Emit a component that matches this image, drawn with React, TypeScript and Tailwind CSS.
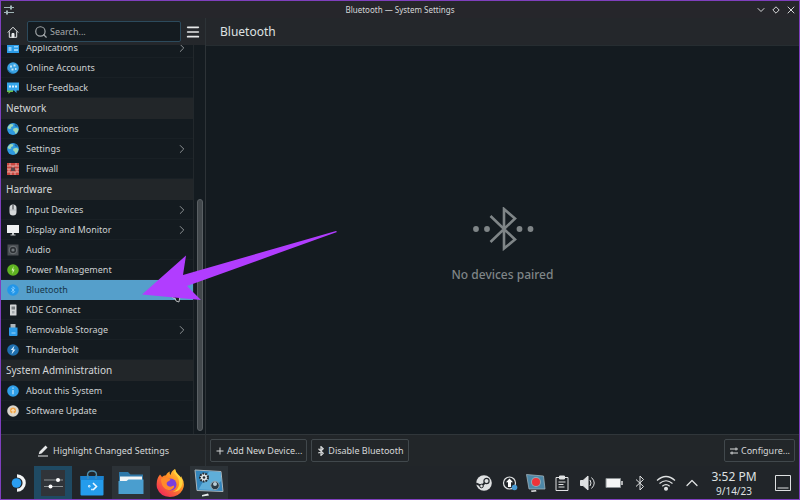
import { useState } from 'react';
import type { ReactNode } from 'react';
import { ChevronDown, ChevronRight, ChevronUp, Menu, Search, X } from 'lucide-react';

type Item = {
  label: string;
  icon: ReactNode;
  hasChildren?: boolean;
};

type Section = {
  title?: string;
  items: Item[];
};

function Globe() {
  return (
    <svg viewBox="0 0 12 12" className="size-3">
      <circle cx="6" cy="6" r="5.9" fill="#2f9be0" />
      <path d="M1 3.5 3.5 1l3 .4-.8 2-1.700.6.400 1.600L2.200 6 .6 5zM6.500 5.500l3-.8 2 1.400-.9 3-2.100 1.800-1-2.400-1.500-1.200z" fill="#9fd8b4" />
      <path d="M8 .8 11 3.500l-2 .3L7.600 2.400z" fill="#1568a8" />
    </svg>
  );
}

function Disc({ color, children }: { color: string; children: ReactNode }) {
  return (
    <svg viewBox="0 0 12 12" className="size-3" fill="none">
      <circle cx="6" cy="6" r="5.8" fill={color} />
      {children}
    </svg>
  );
}

const sections: Section[] = [
  {
    items: [
      {
        label: 'Applications',
        hasChildren: true,
        icon: (
          <svg viewBox="0 0 12 12" className="size-3">
            <path d="M0 1h12v10H0z" fill="#2b9be6" />
            <path d="M1.500 5h3v4h-3zM7 4h4v1.500H7zM7 7h4v2H7z" fill="#8fd0fa" />
          </svg>
        ),
      },
      {
        label: 'Online Accounts',
        icon: (
          <Disc color="#3aa3e3">
            <path d="M3 3.500h2v2H3zM6.500 2.500h2v2h-2zM4.500 6.500h2v2h-2zM8 6h1.500v2H8z" fill="#bfe4f8" />
            <path d="M1 8c1 2 3 3.500 6 3.500" stroke="#1c6ea8" />
          </Disc>
        ),
      },
      {
        label: 'User Feedback',
        icon: (
          <svg viewBox="0 0 12 12" className="size-3">
            <path d="M0 5h6v5H3.500L1.500 12v-2H0z" fill="#6cc04a" />
            <path d="M0 .5h12v8H9.500V11L7 8.500H0z" fill="#35a6ea" />
            <path d="M2 3.500h2v2H2zM5 3.500h2v2H5zM8 3.500h2v2H8z" fill="#d8f0ff" />
          </svg>
        ),
      },
    ],
  },
  {
    title: 'Network',
    items: [
      { label: 'Connections', icon: <Globe /> },
      { label: 'Settings', icon: <Globe />, hasChildren: true },
      {
        label: 'Firewall',
        icon: (
          <svg viewBox="0 0 12 12" className="size-3">
            <path d="M0 0h12v12H0z" fill="#c9463f" />
            <path d="M0 3h12M0 6h12M0 9h12M3 0v3M9 0v3M6 3v3M2 6v3M10 6v3M4 9v3M8 9v3" stroke="#e9bdb6" strokeWidth=".8" />
            <path d="M4 4.500h4v3.500H4z" fill="#5b4548" />
          </svg>
        ),
      },
    ],
  },
  {
    title: 'Hardware',
    items: [
      {
        label: 'Input Devices',
        hasChildren: true,
        icon: (
          <svg viewBox="0 0 12 12" className="size-3">
            <rect x="2.5" y=".5" width="7" height="11" rx="3.5" fill="#d5d8da" />
            <path d="M6 1v4.500" stroke="#5d6266" strokeWidth="1.4" />
            <path d="M2.800 6h6.400" stroke="#a6abae" strokeWidth=".6" />
          </svg>
        ),
      },
      {
        label: 'Display and Monitor',
        hasChildren: true,
        icon: (
          <svg viewBox="0 0 12 12" className="size-3">
            <path d="M0 1h12v8H0z" fill="#eff1f2" />
            <path d="M5 9h2v1.500h1.500v1h-5v-1H5z" fill="#c4c8ca" />
          </svg>
        ),
      },
      {
        label: 'Audio',
        icon: (
          <svg viewBox="0 0 12 12" className="size-3">
            <path d="M.5 .5h11v11H.5z" fill="#4a4f53" />
            <circle cx="6" cy="6" r="3.8" fill="#2c3034" stroke="#7d8387" strokeWidth=".8" />
            <circle cx="6" cy="6" r="1.6" fill="#73797d" />
          </svg>
        ),
      },
      {
        label: 'Power Management',
        icon: (
          <Disc color="#5fb321">
            <path d="M6.600 2 4.500 6.400h1.300L5.400 10l2.200-4.600H6.200z" fill="#d9f5b8" />
          </Disc>
        ),
      },
      {
        label: 'Bluetooth',
        icon: (
          <Disc color="#2296e8">
            <path d="m4.300 4.300 3.400 3.300L6 9.300V2.700l1.700 1.700-3.400 3.300" stroke="#8fd2ff" strokeWidth=".8" />
          </Disc>
        ),
      },
      {
        label: 'KDE Connect',
        icon: (
          <svg viewBox="0 0 12 12" className="size-3">
            <rect x="3" y=".5" width="6.5" height="11" rx=".6" fill="#d3d6d7" />
            <path d="M4.500 2.500H8v3H4.500z" fill="#767c80" />
            <path d="M5 7h2.500v2.500H5z" fill="#a4a9ac" />
          </svg>
        ),
      },
      {
        label: 'Removable Storage',
        hasChildren: true,
        icon: (
          <svg viewBox="0 0 12 12" className="size-3">
            <path d="M3.500 0h5v4h-5z" fill="#aeb5b9" />
            <path d="M2 3.500h8.500V11q0 1-1 1H3q-1 0-1-1z" fill="#2d9ce8" />
            <path d="M4.500 9h4" stroke="#9ad6fb" />
          </svg>
        ),
      },
      {
        label: 'Thunderbolt',
        icon: (
          <Disc color="#1e6fae">
            <path d="M7.500 1.500 3.800 6h2L4.500 10.500 8.500 5.500H6.400z" fill="#d9efff" />
          </Disc>
        ),
      },
    ],
  },
  {
    title: 'System Administration',
    items: [
      {
        label: 'About this System',
        icon: (
          <Disc color="#2f9fe8">
            <path d="M6 5v4.300M6 2.600v1.200" stroke="#d5eeff" strokeWidth="1.1" />
          </Disc>
        ),
      },
      {
        label: 'Software Update',
        icon: (
          <Disc color="#d9d5cc">
            <circle cx="6" cy="5.5" r="3" fill="#f0a64a" />
            <path d="M6 9.500V4.500M4.500 6 6 4.300 7.500 6" stroke="#fff3dd" strokeWidth=".9" />
          </Disc>
        ),
      },
    ],
  },
];

function BluetoothGlyph({ className }: { className?: string }) {
  return (
    <svg viewBox="0 0 16 16" className={className} fill="none" stroke="currentColor">
      <path d="m4 4.500 7.500 7L8 15V1l3.500 3.500-7.500 7" />
    </svg>
  );
}

function Sliders({ className }: { className?: string }) {
  return (
    <svg viewBox="0 0 12 12" className={className} fill="currentColor">
      <path d="M1 3h10v1H1zM1 8h10v1H1z" />
      <path d="M7 1.500h2v4H7zM3 6.500h2v4H3z" />
    </svg>
  );
}

function TitleBar() {
  return (
    <div className="grid h-[17px] shrink-0 grid-cols-3 items-center bg-[#26262b] px-0.5 text-[8px] leading-3 text-[#d6d8d9]">
      <Sliders className="size-3 text-[#9fb3b5]" />
      <span className="text-center">Bluetooth — System Settings</span>
      <div className="flex justify-end gap-[3px]">
        <button aria-label="Minimize">
          <ChevronDown className="size-3" strokeWidth={2} />
        </button>
        <button aria-label="Restore">
          <svg viewBox="0 0 12 12" className="size-3" fill="none" stroke="currentColor">
            <path d="M6 2.800 9.200 6 6 9.200 2.800 6z" />
          </svg>
        </button>
        <button aria-label="Close">
          <X className="size-3" strokeWidth={2} />
        </button>
      </div>
    </div>
  );
}

function Sidebar() {
  const [selected, setSelected] = useState('Bluetooth');

  return (
    <aside className="flex w-[205px] shrink-0 flex-col border-r border-[#2d3337]">
      <div className="flex h-[27px] shrink-0 items-center gap-1 bg-[#24272b] pr-1 pl-1.5">
        <button aria-label="Home">
          <svg viewBox="0 0 12 12" className="size-3" fill="none" stroke="#e6e8e9">
            <path d="M.8 6.500 6 1.200l5.200 5.300M2.300 5.500v5.800h7.400V5.500" />
            <path d="M5 7.500h2v3.800H5z" fill="#e6e8e9" />
          </svg>
        </button>
        <label className="ml-1 flex h-[21px] min-w-0 flex-1 items-center gap-0.5 rounded-xs border border-[#2c4a5c] bg-[#141b20] px-1.5 text-[9px] text-[#a4a9ab]">
          <Search className="size-3.5 shrink-0" strokeWidth={2} />
          <input
            type="text"
            aria-label="Search"
            placeholder="Search..."
            className="min-w-0 flex-1 bg-transparent outline-none placeholder:text-[#a4a9ab]"
          />
        </label>
        <button aria-label="Menu">
          <Menu className="size-4 text-[#e6e8e9]" strokeWidth={2.5} />
        </button>
      </div>

      <div className="flex min-h-0 flex-1 bg-[#141b20]">
        <nav className="min-w-0 flex-1 overflow-hidden border-r border-[#22282c]">
          <div className="-mt-[7px]">
            {sections.map((section, i) => (
              <div key={i}>
                {section.title && (
                  <h2 className="h-[21px] bg-[#222629] px-[5px] text-[10px] leading-[21px] text-[#d5d7d8]">
                    {section.title}
                  </h2>
                )}
                {section.items.map((item) => (
                  <button
                    key={item.label}
                    onClick={() => setSelected(item.label)}
                    className={`flex h-5 w-full items-center gap-[7px] border-b pr-1 pl-1.5 text-left text-[9px] ${
                      selected === item.label
                        ? 'border-[#559fcb] bg-[#559fcb] text-[#17364a]'
                        : 'border-[#192025] text-[#cdd0d1]'
                    }`}
                  >
                    {item.icon}
                    <span className="flex-1">{item.label}</span>
                    {item.hasChildren && <ChevronRight className="size-3.5 text-[#9a9fa1]" strokeWidth={1.5} />}
                  </button>
                ))}
              </div>
            ))}
          </div>
        </nav>
        <div className="flex w-[11px] flex-col justify-end pr-0.5 pb-[3px] pl-[3px]">
          <div className="h-[60%] rounded-full border border-[#5a6064] bg-[#42484c]" />
        </div>
      </div>

      <div className="flex h-8 shrink-0 items-center justify-center border-t border-[#30363a] bg-[#222629]">
        <button className="flex items-center gap-1 text-[9px] text-[#d5d7d8]">
          <svg viewBox="0 0 12 12" className="size-3" fill="#e6e8e9">
            <path d="m2.500 6.500 6-6 2 2-6 6-2.800.8zM1 10.500h10v1H1z" />
          </svg>
          Highlight Changed Settings
        </button>
      </div>
    </aside>
  );
}

const actionButton =
  'flex h-[23px] items-center gap-0.5 rounded-xs border border-[#41484c] bg-[#222629] px-1 text-[9px] text-[#d5d7d8]';

function DevicePage() {
  return (
    <main className="flex min-w-0 flex-1 flex-col">
      <div className="flex h-[27px] shrink-0 items-center bg-[#24272b] px-3.5">
        <h1 className="text-xs text-[#dfe1e2]">Bluetooth</h1>
      </div>

      <div className="flex min-h-0 flex-1 flex-col items-center justify-center gap-3.5 border-t border-[#262d31] bg-[#141b20] pt-3 text-[#7f8587]">
        <svg viewBox="0 0 62 44" className="h-11 w-[62px]" fill="none">
          <path d="M18.500 9 43 32.500 32 41.500V2l11 9.500L18.500 35" stroke="currentColor" strokeWidth="2.6" />
          <g fill="currentColor">
            <circle cx="4" cy="22" r="2.9" />
            <circle cx="15" cy="22" r="2.9" />
            <circle cx="47.5" cy="22" r="2.9" />
            <circle cx="58.5" cy="22" r="2.9" />
          </g>
        </svg>
        <p className="text-xs leading-5 font-medium">No devices paired</p>
      </div>

      <div className="flex h-8 shrink-0 items-center gap-1 border-t border-[#30363a] bg-[#222629] px-1">
        <button className={actionButton}>
          <svg viewBox="0 0 10 10" className="size-2.5" stroke="currentColor">
            <path d="M5 1.500v7M1.500 5h7" />
          </svg>
          Add New Device...
        </button>
        <button className={actionButton}>
          <BluetoothGlyph className="size-2.5 stroke-2" />
          Disable Bluetooth
        </button>
        <button className={`${actionButton} ml-auto`}>
          <svg viewBox="0 0 10 10" className="size-2.5" fill="none" stroke="currentColor">
            <path d="M1 3h8M1 7h8M7 1.500v3M3 5.500v3" />
          </svg>
          Configure...
        </button>
      </div>
    </main>
  );
}

function Taskbar() {
  const slot = 'flex w-[38px] items-center justify-center';
  const tray = 'flex w-[26px] items-center justify-center';

  return (
    <footer className="flex h-[33px] shrink-0 bg-[#212529] pr-2 text-[#dfe1e2]">
      <button aria-label="Application launcher" className="flex w-[33px] items-center justify-center">
        <svg viewBox="0 0 16 20" className="h-5 w-4" fill="none">
          <circle cx="6.5" cy="10" r="4.8" fill="#2a9df0" />
          <path d="M7 2.800a7.200 7.200 0 0 1 0 14.400" stroke="#f4f6f7" strokeWidth="3.2" />
        </svg>
      </button>
      <div className="flex gap-px">
        <button aria-label="System Settings" className={`${slot} bg-[#1f4a63]`}>
          <svg viewBox="0 0 24 26" className="h-[26px] w-6">
            <path d="M0 0h24v26H0z" fill="#303439" />
            <path d="M3 10h19M3 16.500h19" stroke="#8f9497" />
            <circle cx="17" cy="10" r="2" fill="#fff" />
            <circle cx="9.5" cy="16.5" r="2" fill="#fff" />
          </svg>
        </button>
        <button aria-label="Discover" className={slot}>
          <svg viewBox="0 0 24 26" className="h-[26px] w-6" fill="none">
            <path d="M7.500 10V5q0-4 4.500-4t4.500 4v5" stroke="#4f8fae" strokeWidth="1.3" />
            <path d="M.5 6h23v18.500q0 1-1 1h-21q-1 0-1-1z" fill="#249cec" />
            <path d="M.5 6h23v4H.5z" fill="#1b83d0" />
            <path d="M8 5v4M16 5v4" stroke="#4f8fae" />
            <path d="m13 13 3.500 3.500L13 20" stroke="#f0f9ff" strokeWidth="1.6" />
            <path d="M8.500 15.500h1.500v1.500H8.500zM11.500 19h1v1h-1z" stroke="#c8e9ff" />
          </svg>
        </button>
        <button aria-label="File manager" className={`${slot} bg-[#2c3237]`}>
          <svg viewBox="0 0 26 24" className="h-6 w-[26px]">
            <path d="M1 1h9l2.500 2.500H25V12H1z" fill="#2f78a8" />
            <path d="M2 5.500h22V12H2z" fill="#f2f5f6" />
            <path d="M.5 10h8l2-1.500h15V23H.5z" fill="#4a9ecf" />
          </svg>
        </button>
        <button aria-label="Firefox" className={slot}>
          <svg viewBox="0 0 28 28" className="size-7">
            <defs>
              <linearGradient id="fox" x1="1" y1="0" x2="0.2" y2="1">
                <stop offset="0" stopColor="#ffe24a" />
                <stop offset="0.45" stopColor="#ff9022" />
                <stop offset="1" stopColor="#f0245a" />
              </linearGradient>
            </defs>
            <path d="M4 5.500 6 8q1.500-1.500 4-1.700C11 4 12.500 3 14 2.500q-1 2 .5 3.500C15 3 17 1 19 0q0 3 3 5.500 2 1.500 3 4V7q5 8 1.500 14Q22.500 28 14 28 4 27.500 1 19-.5 11 4 5.500" fill="url(#fox)" />
            <circle cx="14.5" cy="15.5" r="6" fill="#7a3fdc" />
            <path d="M5 10q3-2.500 6.500-.5l3 .5q-.5 2-3 2.700-2 2 .5 4.300 3 1.500 5.500-.5 1.500 1-.5 3-3.500 3-7.500.5Q5 17 5 10" fill="#ff8a2a" />
            <path d="M18 4q6 5 5 12-1 5-6 7 8-.5 9.500-8.500Q27 9 22 5.500 19.500 3 19 0z" fill="#ffd43c" />
          </svg>
        </button>
        <button aria-label="Spectacle" className={`${slot} bg-[#2c3237]`}>
          <svg viewBox="0 0 30 30" className="h-[30px] w-[30px]" fill="none">
            <path d="m1 2 26 1.500 2 20L3 22.500z" fill="#3285bd" stroke="#a9b6bd" />
            <path d="M15 3.500 26.500 4l1 8.500-9 9.500-14-.5z" fill="#5faed9" />
            <circle cx="10" cy="9.5" r="4" fill="#dfe5e8" stroke="#252b30" strokeWidth="2" strokeDasharray="1.8 1" />
            <circle cx="10" cy="9.5" r="1.3" fill="#252b30" />
            <circle cx="21" cy="17.5" r="4.2" fill="#2c3b47" stroke="#9aa8b0" />
            <circle cx="21" cy="16" r="2" fill="#b9cbd6" />
            <path d="m8 27 6-1.500 1 2-7 1z" fill="#e8ebec" />
          </svg>
        </button>
      </div>

      <div className="ml-auto flex">
        <button aria-label="Steam" className={tray}>
          <svg viewBox="0 0 16 16" className="size-4" fill="none">
            <circle cx="8" cy="8" r="7.8" fill="#dfe1e2" />
            <path d="m0 8.500 5.500 2.300L10 7" stroke="#23272b" strokeWidth="2" />
            <circle cx="10.5" cy="6" r="2.6" fill="#dfe1e2" stroke="#23272b" strokeWidth="1.2" />
            <circle cx="5.5" cy="11" r="1.8" fill="#dfe1e2" stroke="#23272b" />
          </svg>
        </button>
        <button aria-label="Updates" className={tray}>
          <svg viewBox="0 0 16 16" className="size-4" fill="none">
            <circle cx="7.5" cy="8" r="6" stroke="#dfe1e2" strokeWidth="1.2" />
            <path d="M7.500 3.500 11 7.300H9V12H6V7.300H4z" fill="#fff" />
            <circle cx="12.5" cy="12.5" r="2.8" fill="#4a9bd4" />
          </svg>
        </button>
        <button aria-label="Screen recording" className={tray}>
          <svg viewBox="0 0 20 20" className="size-5">
            <path d="m.5 1.500 17 1.500 1.500 13L3 16z" fill="#4d88a8" stroke="#9fb0b8" strokeWidth=".8" />
            <path d="m5 17.500 5-.5.5 1.500-5 .5z" fill="#dfe1e2" />
            <circle cx="10" cy="9" r="5" fill="#8fa9b5" />
            <circle cx="10" cy="9" r="4" fill="#ee3338" />
          </svg>
        </button>
        <button aria-label="Clipboard" className={tray}>
          <svg viewBox="0 0 16 16" className="size-4" fill="none" stroke="currentColor">
            <path d="M2 2.500h12v13H2z" />
            <path d="M5.500 1h5v3h-5z" fill="currentColor" />
            <path d="M4.500 7h7M4.500 9.500h5M4.500 12h6" />
          </svg>
        </button>
        <button aria-label="Volume" className={tray}>
          <svg viewBox="0 0 16 16" className="size-4" fill="none" stroke="currentColor">
            <path d="M.5 5.500H3L8 1v14l-5-4.500H.5z" fill="currentColor" />
            <path d="M10 5q2 3 0 6M11.500 2.500q5.500 5.500 0 11" />
          </svg>
        </button>
        <button aria-label="Battery" className={tray}>
          <svg viewBox="0 0 18 12" className="h-3 w-[18px]" fill="none">
            <path d="M1 1.500h14.500v9H1z" fill="#f4f5f5" stroke="#8d9295" />
            <path d="M17 4v4" stroke="#dfe1e2" strokeWidth="1.5" />
          </svg>
        </button>
        <button aria-label="Bluetooth status" className={tray}>
          <BluetoothGlyph className="size-4" />
        </button>
        <button aria-label="Wireless" className={tray}>
          <svg viewBox="0 0 20 16" className="h-4 w-5" fill="none" stroke="currentColor" strokeWidth="1.2">
            <path d="M1 5.500q9-8 18 0M3.500 8.500q6.500-5.500 13 0M6.300 11.200q3.700-3 7.400 0" />
            <circle cx="10" cy="13.8" r="1.4" fill="currentColor" />
          </svg>
        </button>
        <button aria-label="Show hidden icons" className={tray}>
          <ChevronUp className="size-5" strokeWidth={1.5} />
        </button>
        <div className="flex w-[58px] flex-col items-center justify-center">
          <span className="text-xs leading-4">3:52 PM</span>
          <span className="text-[10px] leading-3">9/14/23</span>
        </div>
        <button aria-label="Show desktop" className="ml-3 flex items-center">
          <svg viewBox="0 0 16 16" className="size-4" fill="none" stroke="currentColor">
            <path d="M.5 .5h15v15H.5zM2.500 13h11" />
          </svg>
        </button>
      </div>
    </footer>
  );
}

export default function App() {
  return (
    <div className="relative flex h-screen flex-col overflow-hidden border border-[#7f3fbd] bg-[#212529] font-['Noto_Sans',sans-serif]">
      <TitleBar />
      <div className="flex min-h-0 flex-1">
        <Sidebar />
        <DevicePage />
      </div>
      <Taskbar />

      {/* mouse cursor and the arrow pointing at the Bluetooth entry */}
      <svg
        viewBox="0 0 200 80"
        className="pointer-events-none absolute top-[224px] left-[138px] h-20 w-[200px]"
      >
        <path d="m33 70 1 3h2l1 3 3 1 1-6z" fill="#1a1e22" stroke="#d8dadb" strokeWidth=".8" />
        <path d="M3 69.500 47 30.500 44 50 197 6l1 1L48 61l14 14z" fill="#b13dff" />
      </svg>
    </div>
  );
}
